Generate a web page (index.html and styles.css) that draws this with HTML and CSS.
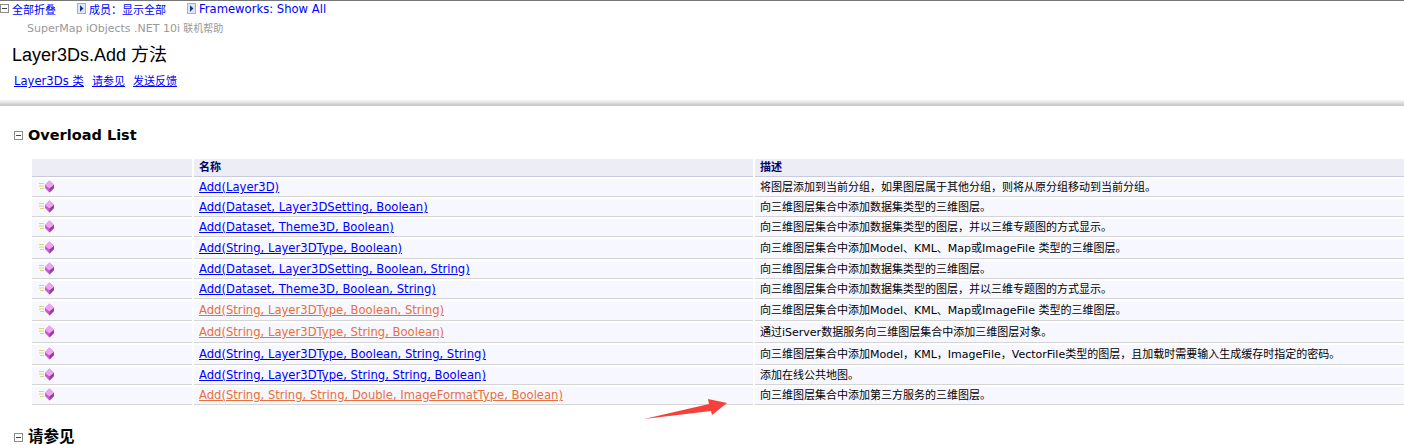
FILE: index.html
```html
<!DOCTYPE html>
<html lang="zh-CN">
<head>
  <meta charset="UTF-8" />
  <title>Layer3Ds.Add 方法</title>
  <link rel="stylesheet" href="styles.css">
</head>
<body>

  <div class="toolbar">
    <span class="tool"><svg class="toggle" viewBox="0 0 9 9"><rect x="0.5" y="0.5" width="8" height="8" fill="#fff" stroke="#8c8c8c"/><path d="M2 4.5h5" stroke="#444"/></svg><a>全部折叠</a></span>
    <span class="tool"><svg class="drop" viewBox="0 0 9 11"><rect x="0.5" y="0.5" width="8" height="10" fill="#dfe6fb" stroke="#9db0e6"/><path d="M3 2.200l3.500 3.300-3.500 3.300z" fill="#123a7c"/></svg><a>成员：显示全部</a></span>
    <span class="tool"><svg class="drop" viewBox="0 0 9 11"><rect x="0.5" y="0.5" width="8" height="10" fill="#dfe6fb" stroke="#9db0e6"/><path d="M3 2.200l3.500 3.300-3.500 3.300z" fill="#123a7c"/></svg><a class="latin">Frameworks: Show All</a></span>
  </div>

  <div class="banner">
    <div class="product"><span class="latin-small">SuperMap iObjects .NET 10i</span> 联机帮助</div>
    <h1 class="page-title">Layer3Ds.Add 方法</h1>
    <div class="links">
      <a class="latin" href="#">Layer3Ds 类</a>
      <a href="#">请参见</a>
      <a href="#">发送反馈</a>
    </div>
  </div>
  <div class="rule"></div>

  <h2 class="section-title first"><svg class="toggle" viewBox="0 0 9 9"><rect x="0.5" y="0.5" width="8" height="8" fill="#fff" stroke="#8c8c8c"/><path d="M2 4.5h5" stroke="#444"/></svg>Overload List</h2>

  <table class="members">
    <thead>
      <tr><th class="col-icon"></th><th class="col-name">名称</th><th>描述</th></tr>
    </thead>
    <tbody>
      <tr class="h20"><td><svg class="method"><use href="#method"/></svg></td><td><a href="#">Add(Layer3D)</a></td><td>将图层添加到当前分组，如果图层属于其他分组，则将从原分组移动到当前分组。</td></tr>
      <tr class="h20"><td><svg class="method"><use href="#method"/></svg></td><td><a href="#">Add(Dataset, Layer3DSetting, Boolean)</a></td><td>向三维图层集合中添加数据集类型的三维图层。</td></tr>
      <tr class="h20"><td><svg class="method"><use href="#method"/></svg></td><td><a href="#">Add(Dataset, Theme3D, Boolean)</a></td><td>向三维图层集合中添加数据集类型的图层，并以三维专题图的方式显示。</td></tr>
      <tr class="h22"><td><svg class="method"><use href="#method"/></svg></td><td><a href="#">Add(String, Layer3DType, Boolean)</a></td><td>向三维图层集合中添加Model、KML、Map或ImageFile 类型的三维图层。</td></tr>
      <tr class="h20"><td><svg class="method"><use href="#method"/></svg></td><td><a href="#">Add(Dataset, Layer3DSetting, Boolean, String)</a></td><td>向三维图层集合中添加数据集类型的三维图层。</td></tr>
      <tr class="h20"><td><svg class="method"><use href="#method"/></svg></td><td><a href="#">Add(Dataset, Theme3D, Boolean, String)</a></td><td>向三维图层集合中添加数据集类型的图层，并以三维专题图的方式显示。</td></tr>
      <tr class="h22"><td><svg class="method"><use href="#method"/></svg></td><td><a class="visited" href="#">Add(String, Layer3DType, Boolean, String)</a></td><td>向三维图层集合中添加Model、KML、Map或ImageFile 类型的三维图层。</td></tr>
      <tr class="h22"><td><svg class="method"><use href="#method"/></svg></td><td><a class="visited" href="#">Add(String, Layer3DType, String, Boolean)</a></td><td>通过iServer数据服务向三维图层集合中添加三维图层对象。</td></tr>
      <tr class="h22"><td><svg class="method"><use href="#method"/></svg></td><td><a href="#">Add(String, Layer3DType, Boolean, String, String)</a></td><td>向三维图层集合中添加Model，KML，ImageFile，VectorFile类型的图层，且加载时需要输入生成缓存时指定的密码。</td></tr>
      <tr class="h20"><td><svg class="method"><use href="#method"/></svg></td><td><a href="#">Add(String, Layer3DType, String, String, Boolean)</a></td><td>添加在线公共地图。</td></tr>
      <tr class="h20"><td><svg class="method"><use href="#method"/></svg></td><td><a class="visited" href="#">Add(String, String, String, Double, ImageFormatType, Boolean)</a></td><td>向三维图层集合中添加第三方服务的三维图层。</td></tr>
    </tbody>
  </table>

  <h2 class="section-title cjk"><svg class="toggle" viewBox="0 0 9 9"><rect x="0.5" y="0.5" width="8" height="8" fill="#fff" stroke="#8c8c8c"/><path d="M2 4.5h5" stroke="#444"/></svg>请参见</h2>

  <svg class="arrow" viewBox="0 0 90 24"><polygon points="1,21 66,6 65,1 84,5 69,17 68,13" fill="#f5413a"/></svg>

  <svg width="0" height="0" class="defs">
    <symbol id="method" viewBox="0 0 16 13">
      <path d="M0 3.500h5M0 6h5M1 8.500h4" stroke="#dcd47c" stroke-width="1"/>
      <path d="M10.500 0.500l4.500 4.500v3l-4.500 4.500-4.500-4.500v-3z" fill="#c85ccf"/>
      <path d="M10.500 0.500l4.500 4.500-4.500 3.500-4.500-3.500z" fill="#f0a4ee"/>
      <path d="M10.500 8.500l4.500-3.500v3l-4.500 4.500z" fill="#9a3aa8"/>
    </symbol>
  </svg>

</body>
</html>
```

FILE: styles.css
```css
/* Reset & Base Styles */
* {
  margin: 0;
  padding: 0;
  box-sizing: border-box;
}

html,
body {
  height: 445px;
  overflow: hidden;
}

body {
  position: relative;
  font-family: "DejaVu Sans", "Noto Sans CJK SC", sans-serif;
  font-size: 11px;
  color: #000;
  background-color: #fff;
}

a {
  color: #0000ff;
  text-decoration: underline;
}

.latin {
  font-size: 11.6px;
}

.latin-small {
  font-size: 11px;
}

.toolbar {
  display: flex;
  align-items: center;
  height: 16px;
  border-top: 1px solid #777;
}

.toolbar a {
  text-decoration: none;
}

.tool {
  display: flex;
  align-items: center;
  margin-right: 21px;
}

.toggle {
  width: 9px;
  height: 9px;
  flex: none;
}

.tool .toggle {
  margin-right: 3px;
}

.drop {
  width: 9px;
  height: 11px;
  margin-right: 3px;
}

.banner {
  height: 83px;
  padding-top: 6px;
  padding-left: 12px;
}

.product {
  padding-left: 15px;
  font-size: 10px;
  line-height: 13px;
  color: #999;
}

.page-title {
  margin-top: 9px;
  font-family: "Liberation Sans", "Noto Sans CJK SC", sans-serif;
  font-size: 18px;
  font-weight: 400;
  line-height: 22px;
}

.links {
  display: flex;
  gap: 8px;
  margin-top: 6px;
  padding-left: 2px;
}

.rule {
  height: 7px;
  background: linear-gradient(to bottom, #fff, #c4c4c4);
}

.section-title {
  display: flex;
  align-items: center;
  gap: 5px;
  height: 20px;
  margin-left: 14px;
  font-size: 14.5px;
  font-weight: 700;
}

.section-title.first {
  margin-top: 19px;
}

.section-title.cjk {
  height: 16px;
  margin-top: 24px;
  font-size: 15.5px;
  line-height: 16px;
}

.members {
  width: 1378px;
  margin-top: 14px;
  margin-left: 30px;
  table-layout: fixed;
  border-collapse: separate;
  border-spacing: 2px 0;
}

.members th {
  height: 18px;
  padding-left: 5px;
  text-align: left;
  font-weight: 700;
  line-height: 14px;
  color: #000066;
  background-color: #ededf6;
  border-bottom: 1px solid #c8cbe0;
}

.col-icon {
  width: 160px;
}

.col-name {
  width: 559px;
}

.members td {
  padding-left: 5px;
  line-height: 14px;
  background-color: #f7f7ff;
  border-top: 2px solid #fff;
  border-bottom: 1px solid #d5d5d5;
  white-space: nowrap;
}

.members td a {
  font-size: 11.6px;
}

.h20 td {
  height: 20px;
}

.h22 td {
  height: 22px;
}

.members a.visited {
  color: #e8703a;
}

.method {
  display: block;
  width: 16px;
  height: 13px;
  margin-left: 2px;
  margin-top: -2px;
}

.arrow {
  position: absolute;
  left: 643px;
  top: 398px;
  width: 90px;
  height: 24px;
}

.defs {
  position: absolute;
}
```
